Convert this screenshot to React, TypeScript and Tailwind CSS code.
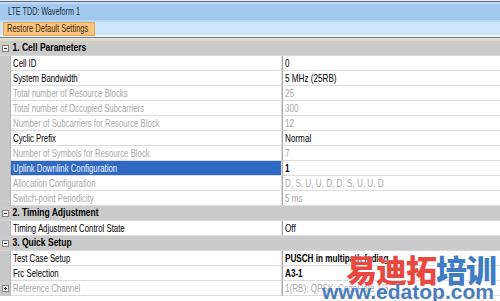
import React from "react";

type Row = { label: string; value: string; dis?: boolean; bold?: boolean; sel?: boolean; plus?: boolean };
type Section = { title: string; rows: Row[] };

const sections: Section[] = [
  {
    title: "1. Cell Parameters",
    rows: [
      { label: "Cell ID", value: "0" },
      { label: "System Bandwidth", value: "5 MHz (25RB)" },
      { label: "Total number of Resource Blocks", value: "25", dis: true },
      { label: "Total number of Occupied Subcarriers", value: "300", dis: true },
      { label: "Number of Subcarriers for Resource Block", value: "12", dis: true },
      { label: "Cyclic Prefix", value: "Normal" },
      { label: "Number of Symbols for Resource Block", value: "7", dis: true },
      { label: "Uplink Downlink Configuration", value: "1", bold: true, sel: true },
      { label: "Allocation Configuration", value: "D, S, U, U, D, D, S, U, U, D", dis: true },
      { label: "Switch-point Periodicity", value: "5 ms", dis: true },
    ],
  },
  {
    title: "2. Timing Adjustment",
    rows: [{ label: "Timing Adjustment Control State", value: "Off" }],
  },
  {
    title: "3. Quick Setup",
    rows: [
      { label: "Test Case Setup", value: "PUSCH in multipath fading", bold: true },
      { label: "Frc Selection", value: "A3-1", bold: true },
      { label: "Reference Channel", value: "1(RB); QPSK; CodeRate 1/3", dis: true, plus: true },
    ],
  },
];

function BoxIcon({ plus }: { plus?: boolean }) {
  return (
    <svg width="7" height="7" viewBox="0 0 7 7" className="block">
      <rect x="0.5" y="0.5" width="6" height="6" fill="#f4f4f4" stroke="#808080" strokeWidth="1" />
      <line x1="2" y1="3.5" x2="5" y2="3.5" stroke="#303030" strokeWidth="1" />
      {plus && <line x1="3.5" y1="2" x2="3.5" y2="5" stroke="#303030" strokeWidth="1" />}
    </svg>
  );
}

function T({ children, className = "" }: { children: React.ReactNode; className?: string }) {
  return (
    <span className={"inline-block whitespace-nowrap origin-left " + className}>{children}</span>
  );
}

export default function App() {
  return (
    <div className="relative w-[500px] h-[301px] overflow-hidden bg-white font-['Liberation_Sans',Arial,sans-serif] text-[11px] leading-none text-black">
      <div className="h-[1px] bg-[#e6ebf3]" />
      <div className="h-[1px] bg-[#5e6e8a]" />
      <div className="h-[2px] bg-[#c2d9f1]" />
      <div className="h-[16px] bg-[#a3c8ee] flex items-center pl-[8px] text-[#1a2a40]">
        <T className="text-[10px] scale-x-[0.72]">LTE TDD: Waveform 1</T>
      </div>
      <div className="h-[2px] bg-[#b8d8f6]" />
      <div className="h-[13px] bg-[#cce7fc] flex items-start pl-[3px]">
        <div className="h-[14px] w-[92px] bg-[#fbc47c] border border-[#e2a456] flex items-center pl-[3px] text-[#3a2a10] -mb-[1px]">
          <T className="text-[10px] scale-x-[0.75]">Restore Default Settings</T>
        </div>
      </div>
      <div className="h-[2px] bg-[#eef4fa]" />
      <div className="h-[1px] bg-[#6a7890]" />
      <div className="h-[1px] bg-[#eceae0]" />
      <div className="h-[2px] bg-[#ddd9bf]" />
      {sections.map((s) => (
        <div key={s.title}>
          <div className="h-[15px] bg-[#cbcbcb] flex items-center border-b border-[#d8d8d8]">
            <div className="w-[11px] flex justify-center">
              <BoxIcon />
            </div>
            <T className="font-bold text-[11.5px] pl-[2px] scale-x-[0.74]">{s.title}</T>
          </div>
          {s.rows.map((r) => (
            <div key={r.label} className="h-[15px] flex bg-[#c9c9c9]">
              <div className="w-[11px] flex items-center justify-center border-r border-[#b4b4b4]">
                {r.plus && <BoxIcon plus />}
              </div>
              <div
                className={
                  "w-[271px] flex items-center pl-[2px] border-b border-r border-[#dcdcdc] " +
                  (r.sel ? "bg-[#316ac5] text-[#f0f4ff]" : "bg-white ") +
                  (r.dis && !r.sel ? " text-[#a8a8a8]" : "")
                }
              >
                <T className="scale-x-[0.71]">{r.label}</T>
              </div>
              <div
                className={
                  "flex-1 flex items-center pl-[2px] bg-white border-b border-[#dcdcdc] border-l border-l-[#a8a8a8] " +
                  (r.dis ? "text-[#a8a8a8] " : "") +
                  (r.bold ? "font-bold" : "")
                }
              >
                <T className="scale-x-[0.74]">{r.value}</T>
              </div>
            </div>
          ))}
        </div>
      ))}
      <div className="absolute left-[346px] top-[253px] font-['Noto_Sans_CJK_SC',sans-serif] font-black text-[31px] leading-none tracking-[-1px] whitespace-nowrap [text-shadow:0_0_2px_#ffffff]">
        <span className="text-[#e8483f]">易迪拓</span>
        <span className="text-[#3f7cc4]">培训</span>
      </div>
      <div className="absolute left-[322px] top-[281px] font-['Liberation_Sans',Arial,sans-serif] font-bold text-[21px] leading-none whitespace-nowrap text-[#4a7cbc] [text-shadow:0_0_2px_#ffffff]">
        www.edatop.com
      </div>
    </div>
  );
}
